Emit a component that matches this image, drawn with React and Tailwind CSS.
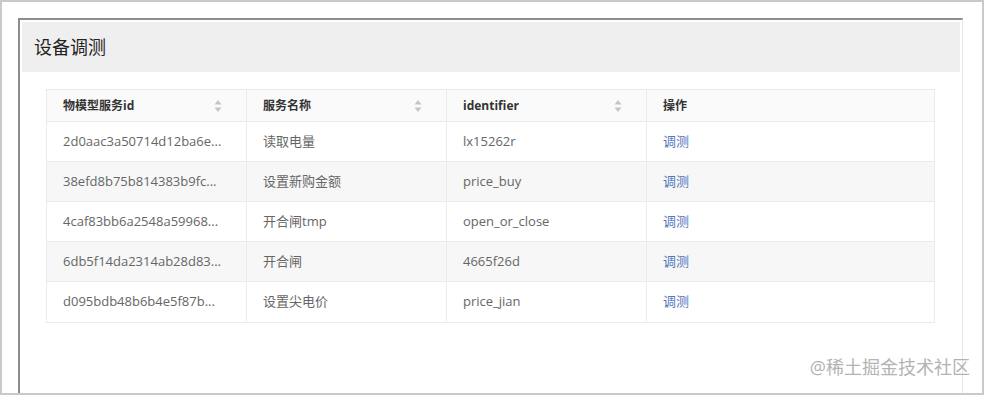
import React from 'react';

const rows = [
  ['2d0aac3a50714d12ba6e...', '读取电量', 'lx15262r'],
  ['38efd8b75b814383b9fc...', '设置新购金额', 'price_buy'],
  ['4caf83bb6a2548a59968...', '开合闸tmp', 'open_or_close'],
  ['6db5f14da2314ab28d83...', '开合闸', '4665f26d'],
  ['d095bdb48b6b4e5f87b...', '设置尖电价', 'price_jian'],
];

const cols = [
  ['物模型服务id', true, 'w-[200px]'],
  ['服务名称', true, 'w-[200px]'],
  ['identifier', true, 'w-[200px]'],
  ['操作', false, 'flex-1'],
];

function SortIcon() {
  return (
    <svg width="8" height="14" viewBox="0 0 8 14" className="shrink-0">
      <path d="M4 1 L7.5 5.5 L0.5 5.5 Z" fill="#c4c4c4" />
      <path d="M4 13 L7.5 8.5 L0.5 8.5 Z" fill="#c4c4c4" />
    </svg>
  );
}

export default function App() {
  return (
    <div className="relative w-[984px] h-[395px] overflow-hidden bg-white border-2 border-[#c9c9c9] pl-4 pt-4 flex" style={{ fontFamily: '"Open Sans", "Noto Sans CJK SC", sans-serif' }}>
      <div className="w-[945px] flex flex-col border-l-2 border-t-2 border-[#8d8d8d] border-r border-r-[#e6e6e6] p-[2px]">
        <div className="h-[50px] bg-[#efefef] flex items-center pl-3 text-[18px] text-[#222]">设备调测</div>

        <div className="mt-[17px] ml-6 w-[889px] border border-[#ebebeb] text-[13px]">
          <div className="flex h-[32px] bg-[#fafafa] border-b border-[#ebebeb]">
            {cols.map(([label, sort, w], i) => (
              <div key={label} className={`${w} flex items-center justify-between px-4 font-bold text-[12px] text-[#333] ${i < 3 ? 'border-r border-[#ebebeb]' : ''}`}>
                <span>{label}</span>
                {sort && <span className="mr-2"><SortIcon /></span>}
              </div>
            ))}
          </div>
          {rows.map((r, ri) => (
            <div key={r[0]} className={`flex h-[40px] text-[#666] ${ri % 2 === 1 ? 'bg-[#f7f7f7]' : 'bg-white'} ${ri < rows.length - 1 ? 'border-b border-[#ebebeb]' : ''}`}>
              <div className="w-[200px] flex items-center px-4 border-r border-[#ebebeb]">{r[0]}</div>
              <div className="w-[200px] flex items-center px-4 border-r border-[#ebebeb]">{r[1]}</div>
              <div className="w-[200px] flex items-center px-4 border-r border-[#ebebeb]">{r[2]}</div>
              <div className="flex-1 flex items-center px-4 text-[#5276bd]">调测</div>
            </div>
          ))}
        </div>
      </div>

      <div className="absolute right-[12px] bottom-[12px] text-[18px] text-[#b3b3b3]">@稀土掘金技术社区</div>
    </div>
  );
}
